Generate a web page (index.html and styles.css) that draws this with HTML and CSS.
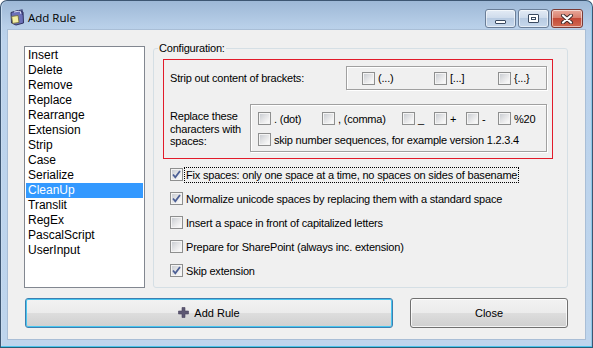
FILE: index.html
```html
<!DOCTYPE html>
<html>
<head>
<meta charset="utf-8">
<title>Add Rule</title>
<link rel="stylesheet" href="styles.css">
</head>
<body>
<div class="window">
  <div class="titlebar">
    <svg class="app-icon" width="16" height="17" viewBox="0 0 16 17">
      <path d="M2 3.5 L9 1.5 L14 3 L14.5 14 L7 16 L2.5 14 Z" fill="#6b70b8" stroke="#2e3160" stroke-width="1"/>
      <path d="M5 3 L11 2 L12 5" fill="none" stroke="#d8dcf5" stroke-width="1"/>
      <path d="M10 1.5 L13 1 L13.5 6" fill="none" stroke="#3a3d70" stroke-width="1.2"/>
      <rect x="3" y="7" width="6.5" height="7" fill="#f4efa2" stroke="#6b6a3c" stroke-width="0.8" transform="rotate(-8 6 10)"/>
    </svg>
    <span class="title">Add Rule</span>
    <div class="caption-buttons">
      <span class="cap cap-min"><span class="glyph-min"></span></span>
      <span class="cap cap-max"><span class="glyph-max"></span></span>
      <span class="cap cap-close">
        <svg width="14" height="10" viewBox="0 0 14 10">
          <path d="M3 1.5 L11 8.5 M11 1.5 L3 8.5" stroke="#3c2a2a" stroke-width="4" stroke-linecap="round"/>
          <path d="M3 1.5 L11 8.5 M11 1.5 L3 8.5" stroke="#ffffff" stroke-width="2.2" stroke-linecap="round"/>
        </svg>
      </span>
    </div>
  </div>
  <div class="client">
    <div class="main">
      <ul class="listbox">
        <li>Insert</li>
        <li>Delete</li>
        <li>Remove</li>
        <li>Replace</li>
        <li>Rearrange</li>
        <li>Extension</li>
        <li>Strip</li>
        <li>Case</li>
        <li>Serialize</li>
        <li class="selected">CleanUp</li>
        <li>Translit</li>
        <li>RegEx</li>
        <li>PascalScript</li>
        <li>UserInput</li>
      </ul>
      <fieldset class="group">
        <legend>Configuration:</legend>
        <div class="redbox">
          <div class="rb-row rb-row1">
            <span class="rb-label">Strip out content of brackets:</span>
            <div class="frame frame-brackets">
              <label class="opt w72"><span class="cb"></span>(...)</label>
              <label class="opt w64"><span class="cb"></span>[...]</label>
              <label class="opt"><span class="cb"></span>{...}</label>
            </div>
          </div>
          <div class="rb-row rb-row2">
            <span class="rb-label multi">Replace these<br>characters with<br>spaces:</span>
            <div class="frame frame-chars">
              <div class="chars-line">
                <label class="opt w64"><span class="cb"></span>. (dot)</label>
                <label class="opt w80"><span class="cb"></span>, (comma)</label>
                <label class="opt w32"><span class="cb"></span>_</label>
                <label class="opt w32"><span class="cb"></span>+</label>
                <label class="opt w32"><span class="cb"></span>-</label>
                <label class="opt"><span class="cb"></span>%20</label>
              </div>
              <div class="chars-line">
                <label class="opt"><span class="cb"></span>skip number sequences, for example version 1.2.3.4</label>
              </div>
            </div>
          </div>
        </div>
        <div class="options">
          <label class="opt"><span class="cb checked"><svg width="11" height="11" viewBox="0 0 11 11"><path d="M2 5.5 L4.3 8.3 L9 2" fill="none" stroke="#4c5f95" stroke-width="1.8"/></svg></span><span class="focus">Fix spaces: only one space at a time, no spaces on sides of basename</span></label>
          <label class="opt"><span class="cb checked"><svg width="11" height="11" viewBox="0 0 11 11"><path d="M2 5.5 L4.3 8.3 L9 2" fill="none" stroke="#4c5f95" stroke-width="1.8"/></svg></span>Normalize unicode spaces by replacing them with a standard space</label>
          <label class="opt"><span class="cb"></span>Insert a space in front of capitalized letters</label>
          <label class="opt"><span class="cb"></span>Prepare for SharePoint (always inc. extension)</label>
          <label class="opt"><span class="cb checked"><svg width="11" height="11" viewBox="0 0 11 11"><path d="M2 5.5 L4.3 8.3 L9 2" fill="none" stroke="#4c5f95" stroke-width="1.8"/></svg></span>Skip extension</label>
        </div>
      </fieldset>
    </div>
    <div class="buttons">
      <button class="btn btn-default">
        <svg class="plus" width="11" height="11" viewBox="0 0 11 11">
          <path d="M4 0.5 H7 V4 H10.5 V7 H7 V10.5 H4 V7 H0.5 V4 H4 Z" fill="#5d5873" stroke="#4a4560" stroke-width="0.6"/>
        </svg>
        Add Rule
      </button>
      <button class="btn btn-close">Close</button>
    </div>
  </div>
</div>
</body>
</html>
```

FILE: styles.css
```css
* { box-sizing: border-box; }

html, body {
  margin: 0;
  padding: 0;
  background: #ffffff;
}

body {
  font-family: "Liberation Sans", Arial, sans-serif;
  font-size: 11px;
  color: #000;
}

.window {
  width: 593px;
  height: 348px;
  border: 1px solid #3d5672;
  border-bottom-color: #23607a;
  border-radius: 7px 7px 0 0;
  background: linear-gradient(to bottom, #9db8d6 0px, #aac3df 12px, #b9d0e9 26px, #bcd3ec 40px, #bed5ed 100%);
  box-shadow: inset 0 -1px 0 #4fc3ea, inset -1px 0 0 #8fc8e8, inset 1px 0 0 #c9dcf0;
  display: flex;
  flex-direction: column;
  overflow: hidden;
}

/* ---------- title bar ---------- */
.titlebar {
  height: 29px;
  display: flex;
  align-items: flex-start;
  padding-left: 8px;
  flex: 0 0 auto;
}

.app-icon {
  margin-top: 8px;
  flex: 0 0 auto;
}

.title {
  font-family: "Open Sans", "Noto Sans", sans-serif;
  font-size: 11.5px;
  margin-left: 3px;
  margin-top: 9px;
  line-height: 16px;
  color: #000;
}

.caption-buttons {
  margin-left: auto;
  margin-right: 9px;
  margin-top: 8px;
  display: flex;
  gap: 2px;
}

.cap {
  height: 19px;
  border: 1px solid #6a7e98;
  border-radius: 3px;
  display: flex;
  align-items: center;
  justify-content: center;
  box-shadow: inset 0 0 0 1px rgba(255,255,255,0.55);
}

.cap-min, .cap-max {
  width: 31px;
  background: linear-gradient(to bottom, #e3ebf5 0%, #cfdcec 45%, #b8cbe2 50%, #c7d8ec 100%);
}

.cap-close {
  width: 32px;
  border-color: #7a3a35;
  background: linear-gradient(to bottom, #e9a99b 0%, #d9806f 45%, #c44a38 50%, #d26a52 100%);
}

.glyph-min {
  width: 11px;
  height: 4px;
  margin-top: 6px;
  background: #fff;
  border: 1px solid #3a4a60;
  border-radius: 1px;
}

.glyph-max {
  width: 11px;
  height: 9px;
  border: 1px solid #3a4a60;
  background: #fff;
  box-shadow: inset 0 0 0 2px #fff, inset 0 0 0 3px #3a4a60;
  border-radius: 1px;
}

/* ---------- client ---------- */
.client {
  margin: 0 7px;
  height: 309px;
  background: #f0f0f0;
  padding: 12px 17px 0 16px;
  display: flex;
  flex-direction: column;
  box-shadow: 0 0 0 1px #a9bed6;
}

.main {
  display: flex;
  align-items: flex-start;
  gap: 8px;
}

.listbox {
  list-style: none;
  margin: 4px 0 0 0;
  width: 121px;
  height: 242px;
  padding: 1px;
  border: 1px solid #828790;
  background: #fff;
  flex: 0 0 auto;
  font-size: 12px;
}

.listbox li {
  height: 15px;
  line-height: 15px;
  padding-left: 2px;
  white-space: nowrap;
}

.listbox li.selected {
  background: #3399ff;
  color: #fff;
}

.group {
  flex: 1 1 auto;
  margin: 0;
  padding: 0;
  height: 246px;
  border: 1px solid #d5dfe5;
  border-radius: 3px;
  min-width: 0;
  letter-spacing: -0.2px;
}

.group legend {
  margin-left: 4px;
  padding: 0 1px;
  line-height: 13px;
}

.redbox {
  margin: 4px 14px 0 9px;
  border: 1px solid #e21b2a;
  padding: 6px 5px 6px 6px;
}

.rb-row {
  display: flex;
  align-items: center;
  justify-content: space-between;
}

.rb-row2 { margin-top: 14px; }

.rb-label.multi {
  line-height: 12.5px;
  padding-top: 2px;
}

.frame {
  border: 1px solid #a0a0a0;
  box-shadow: inset 1px 1px 0 #fff, 1px 1px 0 #fff;
}

.frame-brackets {
  width: 201px;
  height: 24px;
  display: flex;
  align-items: center;
  padding-left: 15px;
}

.frame-chars {
  width: 297px;
  height: 48px;
  padding: 7px 0 0 7px;
  display: flex;
  flex-direction: column;
  gap: 8px;
}

.chars-line {
  display: flex;
  align-items: center;
}

.opt {
  display: flex;
  align-items: center;
  gap: 3px;
  height: 13px;
  white-space: nowrap;
}

.w32 { width: 32px; }
.w64 { width: 64px; }
.w72 { width: 72px; }
.w80 { width: 80px; }

.cb {
  width: 13px;
  height: 13px;
  flex: 0 0 13px;
  border: 1px solid #8e8f8f;
  background: linear-gradient(135deg, #c4c8ce 0%, #e2e3e5 45%, #f6f6f6 80%, #fbfbfb 100%);
  box-shadow: inset 0 0 0 1px #f4f4f4;
  display: flex;
  align-items: center;
  justify-content: center;
}

.cb svg {
  display: block;
}

.options {
  margin-top: 9px;
  padding-left: 16px;
  display: flex;
  flex-direction: column;
  gap: 11px;
}

.focus {
  outline: 1px dotted #000;
  outline-offset: 0;
  padding: 0 1px;
  line-height: 14px;
  margin-left: -1px;
}

/* ---------- buttons ---------- */
.buttons {
  display: flex;
  margin-top: 10px;
  padding-left: 1px;
}

.btn {
  height: 30px;
  font-family: "Liberation Sans", Arial, sans-serif;
  font-size: 11px;
  color: #000;
  border: 1px solid #707070;
  border-radius: 3px;
  background: linear-gradient(to bottom, #f2f2f2 0%, #ebebeb 50%, #dddddd 51%, #cfcfcf 100%);
  box-shadow: inset 0 0 0 1px rgba(255,255,255,0.75);
  display: flex;
  align-items: center;
  justify-content: center;
  gap: 5px;
  padding: 0;
}

.btn-default {
  width: 368px;
  border-color: #3c7fb1;
  box-shadow: inset 0 0 0 1px #48c6f0;
}

.btn-close {
  width: 158px;
  margin-left: auto;
}

.plus {
  margin-top: -1px;
}
```
